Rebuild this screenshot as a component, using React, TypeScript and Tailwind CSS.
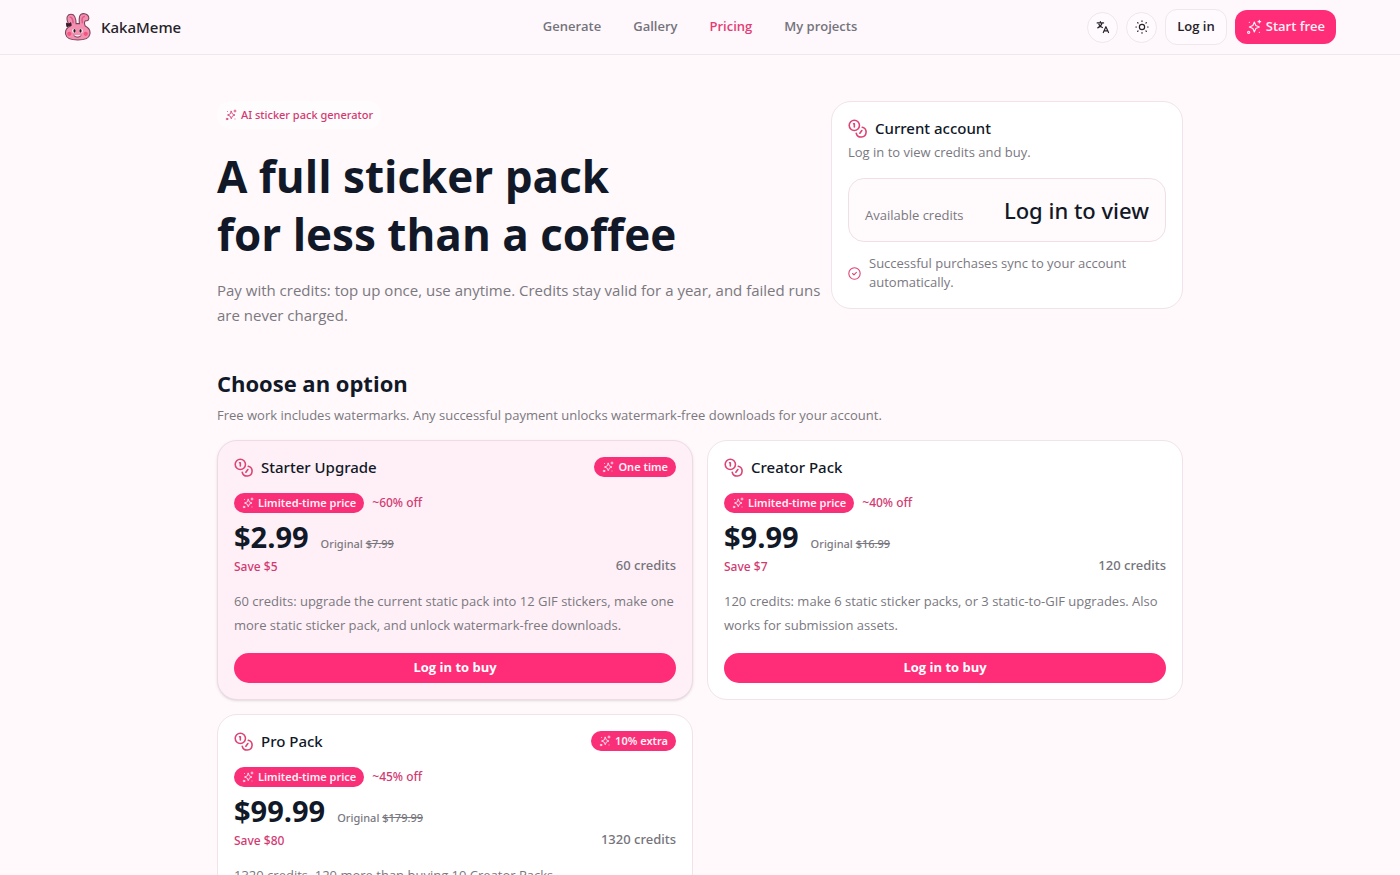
import type { ReactNode } from "react";

const navLinks = ["Generate", "Gallery", "Pricing", "My projects"];

const plans = [
  {
    name: "Starter Upgrade",
    tag: "One time",
    off: "~60% off",
    price: "$2.99",
    original: "$7.99",
    save: "Save $5",
    credits: "60 credits",
    description:
      "60 credits: upgrade the current static pack into 12 GIF stickers, make one more static sticker pack, and unlock watermark-free downloads.",
    featured: true,
  },
  {
    name: "Creator Pack",
    off: "~40% off",
    price: "$9.99",
    original: "$16.99",
    save: "Save $7",
    credits: "120 credits",
    description:
      "120 credits: make 6 static sticker packs, or 3 static-to-GIF upgrades. Also works for submission assets.",
  },
  {
    name: "Pro Pack",
    tag: "10% extra",
    off: "~45% off",
    price: "$99.99",
    original: "$179.99",
    save: "Save $80",
    credits: "1320 credits",
    description: "1320 credits, 120 more than buying 10 Creator Packs.",
  },
];

type Plan = (typeof plans)[number];

// Open Sans has no medium weight, Noto Sans does
const medium = "font-['Noto_Sans',sans-serif] font-medium";

function Icon({ className, children }: { className: string; children: ReactNode }) {
  return (
    <svg
      viewBox="0 0 24 24"
      fill="none"
      stroke="currentColor"
      strokeWidth="2"
      strokeLinecap="round"
      strokeLinejoin="round"
      aria-hidden="true"
      className={className}
    >
      {children}
    </svg>
  );
}

function Sparkles({ className }: { className: string }) {
  return (
    <Icon className={className}>
      <g strokeWidth="1.700">
        <path d="M12.500 4.500 14.700 9.800l5.300 2.200-5.300 2.200-2.200 5.300-2.200-5.300L5 12l5.300-2.200Z" />
        <path d="M20 2v4M18 4h4" />
        <circle cx="4" cy="20" r="1.600" />
        <path d="M5 5h.01M20 20h.01" />
      </g>
    </Icon>
  );
}

function Coins({ className }: { className: string }) {
  return (
    <Icon className={className}>
      <circle cx="8" cy="8" r="6.500" />
      <path d="M7 6h1v4" />
      <path d="M18 10.400a6.300 6.300 0 1 1-7.600 7.600" />
      <path d="m17.500 14.500-2.500 3.500" />
    </Icon>
  );
}

function Bunny() {
  return (
    <svg viewBox="0 0 28 29" aria-hidden="true" className="size-7">
      <path
        d="M6 13.500C3 10.500 2 6 3 3.500 4.500.5 9 .5 10.500 3.500c1.200 2.400 1.500 5 1.500 7.500h3.500c-.5-4-1-7.500 1.500-9.500 2-1.500 6-1 7.500 1.500 1.200 2 .8 4.500-1 5-1.500.3-2-.5-2.500 1-.5 1.500-.2 3 .5 4.500 4 2 5.500 5 4.800 8.500-.8 4-6 6-12.500 6S2 26 1.200 22c-.7-3.500 1-6.500 4.800-8.500Z"
        fill="#f58fb2"
        stroke="#7a4358"
        strokeWidth="1.100"
      />
      <path d="M6 4.500c1.500-.5 2.500 2 3 5.500M18.500 10c-.8-3.500-.2-6 2-6.500" stroke="#dd5f88" strokeWidth="1.600" strokeLinecap="round" fill="none" />
      <circle cx="5" cy="21.500" r="2.200" fill="#f2557f" />
      <circle cx="22" cy="21.500" r="2.200" fill="#f2557f" />
      <ellipse cx="10" cy="18.500" rx="2" ry="2.300" fill="#fff" />
      <ellipse cx="17" cy="18.500" rx="2" ry="2.300" fill="#fff" />
      <ellipse cx="10.400" cy="18.500" rx="1.200" ry="1.900" fill="#2c1820" />
      <ellipse cx="16.600" cy="18.500" rx="1.200" ry="1.900" fill="#2c1820" />
      <path d="M9.500 23c2 2.500 6 2.500 8 0" fill="#fff" stroke="#5c2c3e" />
      <path d="m2 10.500 2.500 1 2-1.500.5 3-2 .2-2.500 1Z" fill="#3a1a28" stroke="#3a1a28" strokeLinejoin="round" />
    </svg>
  );
}

function Badge({ children }: { children: ReactNode }) {
  return (
    <span className="flex h-5 items-center gap-1 rounded-full bg-[#f92f77] px-2 font-['Noto_Sans',sans-serif] text-[11px] font-semibold text-[#fff0f6]">
      <Sparkles className="size-3" />
      {children}
    </span>
  );
}

function Header() {
  return (
    <header className="border-b border-[#f0e6ec] bg-[#fef8fd]">
      <div className="mx-auto grid h-[54px] max-w-[1400px] grid-cols-[1fr_auto_1fr] items-center px-16">
        <a href="#" className={`flex items-center gap-[9px] text-[15px] text-[#25222a] ${medium}`}>
          <Bunny />
          KakaMeme
        </a>
        <nav className="flex gap-8 text-[13px] font-semibold text-[#75737b]">
          {navLinks.map((link) => (
            <a key={link} href="#" className={link === "Pricing" ? "text-[#e33d74]" : ""}>
              {link}
            </a>
          ))}
        </nav>
        <div className="flex items-center justify-end gap-2 text-[13px] text-[#25222a]">
          <button aria-label="Language" className="flex size-[31px] items-center justify-center rounded-full border border-[#f0e6ec] bg-[#fffafd]">
            <Icon className="size-3.5">
              <path d="M2 5h11M7.500 2.500V5M10.500 5C9.500 9 6.500 12 3 13.500M5 7.500c1.500 3 3.500 4.500 6 5.500M12.500 21.500l4.500-10 4.500 10M14 18.500h6" />
            </Icon>
          </button>
          <button aria-label="Theme" className="flex size-[31px] items-center justify-center rounded-full border border-[#f0e6ec] bg-[#fffafd]">
            <Icon className="size-3.5">
              <circle cx="12" cy="12" r="4.500" />
              <path d="M12 1.500v1M12 21.500v1M1.500 12h1M21.500 12h1M4.500 4.500l.7.7M18.800 18.800l.7.7M4.500 19.500l.7-.7M18.800 5.200l.7-.7" />
            </Icon>
          </button>
          <button className="h-9 rounded-xl border border-[#f0e6ec] bg-[#fffafd] px-[11px] font-semibold">Log in</button>
          <button className="flex h-[34px] items-center gap-1 rounded-xl bg-[#ff2d78] px-[11px] font-semibold text-[#fff0f6]">
            <Sparkles className="size-4" />
            Start free
          </button>
        </div>
      </div>
    </header>
  );
}

function AccountCard() {
  return (
    <section className="rounded-[20px] border border-[#f1e3e9] bg-white p-4">
      <h2 className={`flex items-center gap-2 text-[15px] leading-5 text-[#111827] ${medium}`}>
        <Coins className="size-[19px] text-[#dd4373]" />
        Current account
      </h2>
      <p className="mt-1 text-[13px] leading-5 text-[#7a787f]">Log in to view credits and buy.</p>
      <div className="mt-4 flex h-16 items-center justify-between rounded-[16px] border border-[#f1dfe5] bg-[#fffbfc] px-4">
        <span className="pt-3 text-[13px] text-[#7a787f]">Available credits</span>
        <span className={`text-[22px] text-[#111827] ${medium}`}>Log in to view</span>
      </div>
      <p className="mt-3 flex items-center gap-2 text-[13px] leading-[19px] text-[#7a787f]">
        <Icon className="size-[13px] shrink-0 text-[#dd4373]">
          <circle cx="12" cy="12" r="10.500" />
          <path d="m8.500 12 2.500 2.500 4.500-4.500" />
        </Icon>
        Successful purchases sync to your account automatically.
      </p>
    </section>
  );
}

function PlanCard({ plan }: { plan: Plan }) {
  return (
    <article
      className={
        plan.featured
          ? "rounded-[20px] border border-[#efdbe4] bg-[#fff0f7] p-4 shadow-sm"
          : "rounded-[20px] border border-[#f1e3e9] bg-white p-4"
      }
    >
      <div className="flex h-5 items-center justify-between">
        <h3 className={`flex items-center gap-2 text-[15px] text-[#111827] ${medium}`}>
          <Coins className="size-[19px] text-[#dd4373]" />
          {plan.name}
        </h3>
        {plan.tag && <Badge>{plan.tag}</Badge>}
      </div>
      <div className={`mt-4 flex items-center gap-2 text-[12px] text-[#d23a72] ${medium}`}>
        <Badge>Limited-time price</Badge>
        {plan.off}
      </div>
      <div className="mt-1 flex items-end justify-between">
        <div>
          <p className="flex items-baseline gap-3">
            <span className="text-[29px] leading-10 font-bold text-[#111827]">{plan.price}</span>
            <span className={`text-[11px] text-[#7a787f] ${medium}`}>
              Original <s>{plan.original}</s>
            </span>
          </p>
          <p className={`text-[12px] leading-5 text-[#d23a72] ${medium}`}>{plan.save}</p>
        </div>
        <p className={`text-[13px] leading-6 text-[#75737b] ${medium}`}>{plan.credits}</p>
      </div>
      <p className="mt-3 text-[13px] leading-6 text-[#7a787f]">{plan.description}</p>
      <button className="mt-4 h-[30px] w-full rounded-full bg-[#ff2d78] text-[13px] font-bold text-white">
        Log in to buy
      </button>
    </article>
  );
}

export default function App() {
  return (
    <div className="min-h-screen bg-[#fff9fb] font-['Open_Sans','Noto_Sans',sans-serif]">
      <Header />
      <main className="mx-auto max-w-[966px] pt-[46px] pb-12">
        <div className="grid grid-cols-[1fr_352px] items-start gap-2">
          <div>
            <span className={`inline-flex h-7 items-center gap-1 rounded-full bg-[#fffcfd] px-2 text-[11px] text-[#d23a72] ${medium}`}>
              <Sparkles className="size-3" />
              AI sticker pack generator
            </span>
            <h1 className="mt-[18px] text-[44px] leading-[58px] font-bold text-[#111827]">
              A full sticker pack
              <br />
              for less than a coffee
            </h1>
            <p className="mt-[15px] text-[15px] leading-[25px] text-[#7a787f]">
              Pay with credits: top up once, use anytime. Credits stay valid for a year, and failed runs are never charged.
            </p>
          </div>
          <AccountCard />
        </div>
        <h2 className="mt-[39px] text-[22px] leading-8 font-bold text-[#111827]">Choose an option</h2>
        <p className="mt-1 text-[13px] leading-6 text-[#7a787f]">
          Free work includes watermarks. Any successful payment unlocks watermark-free downloads for your account.
        </p>
        <div className="mt-[13px] grid grid-cols-2 gap-[14px]">
          {plans.map((plan) => (
            <PlanCard key={plan.name} plan={plan} />
          ))}
        </div>
      </main>
    </div>
  );
}
